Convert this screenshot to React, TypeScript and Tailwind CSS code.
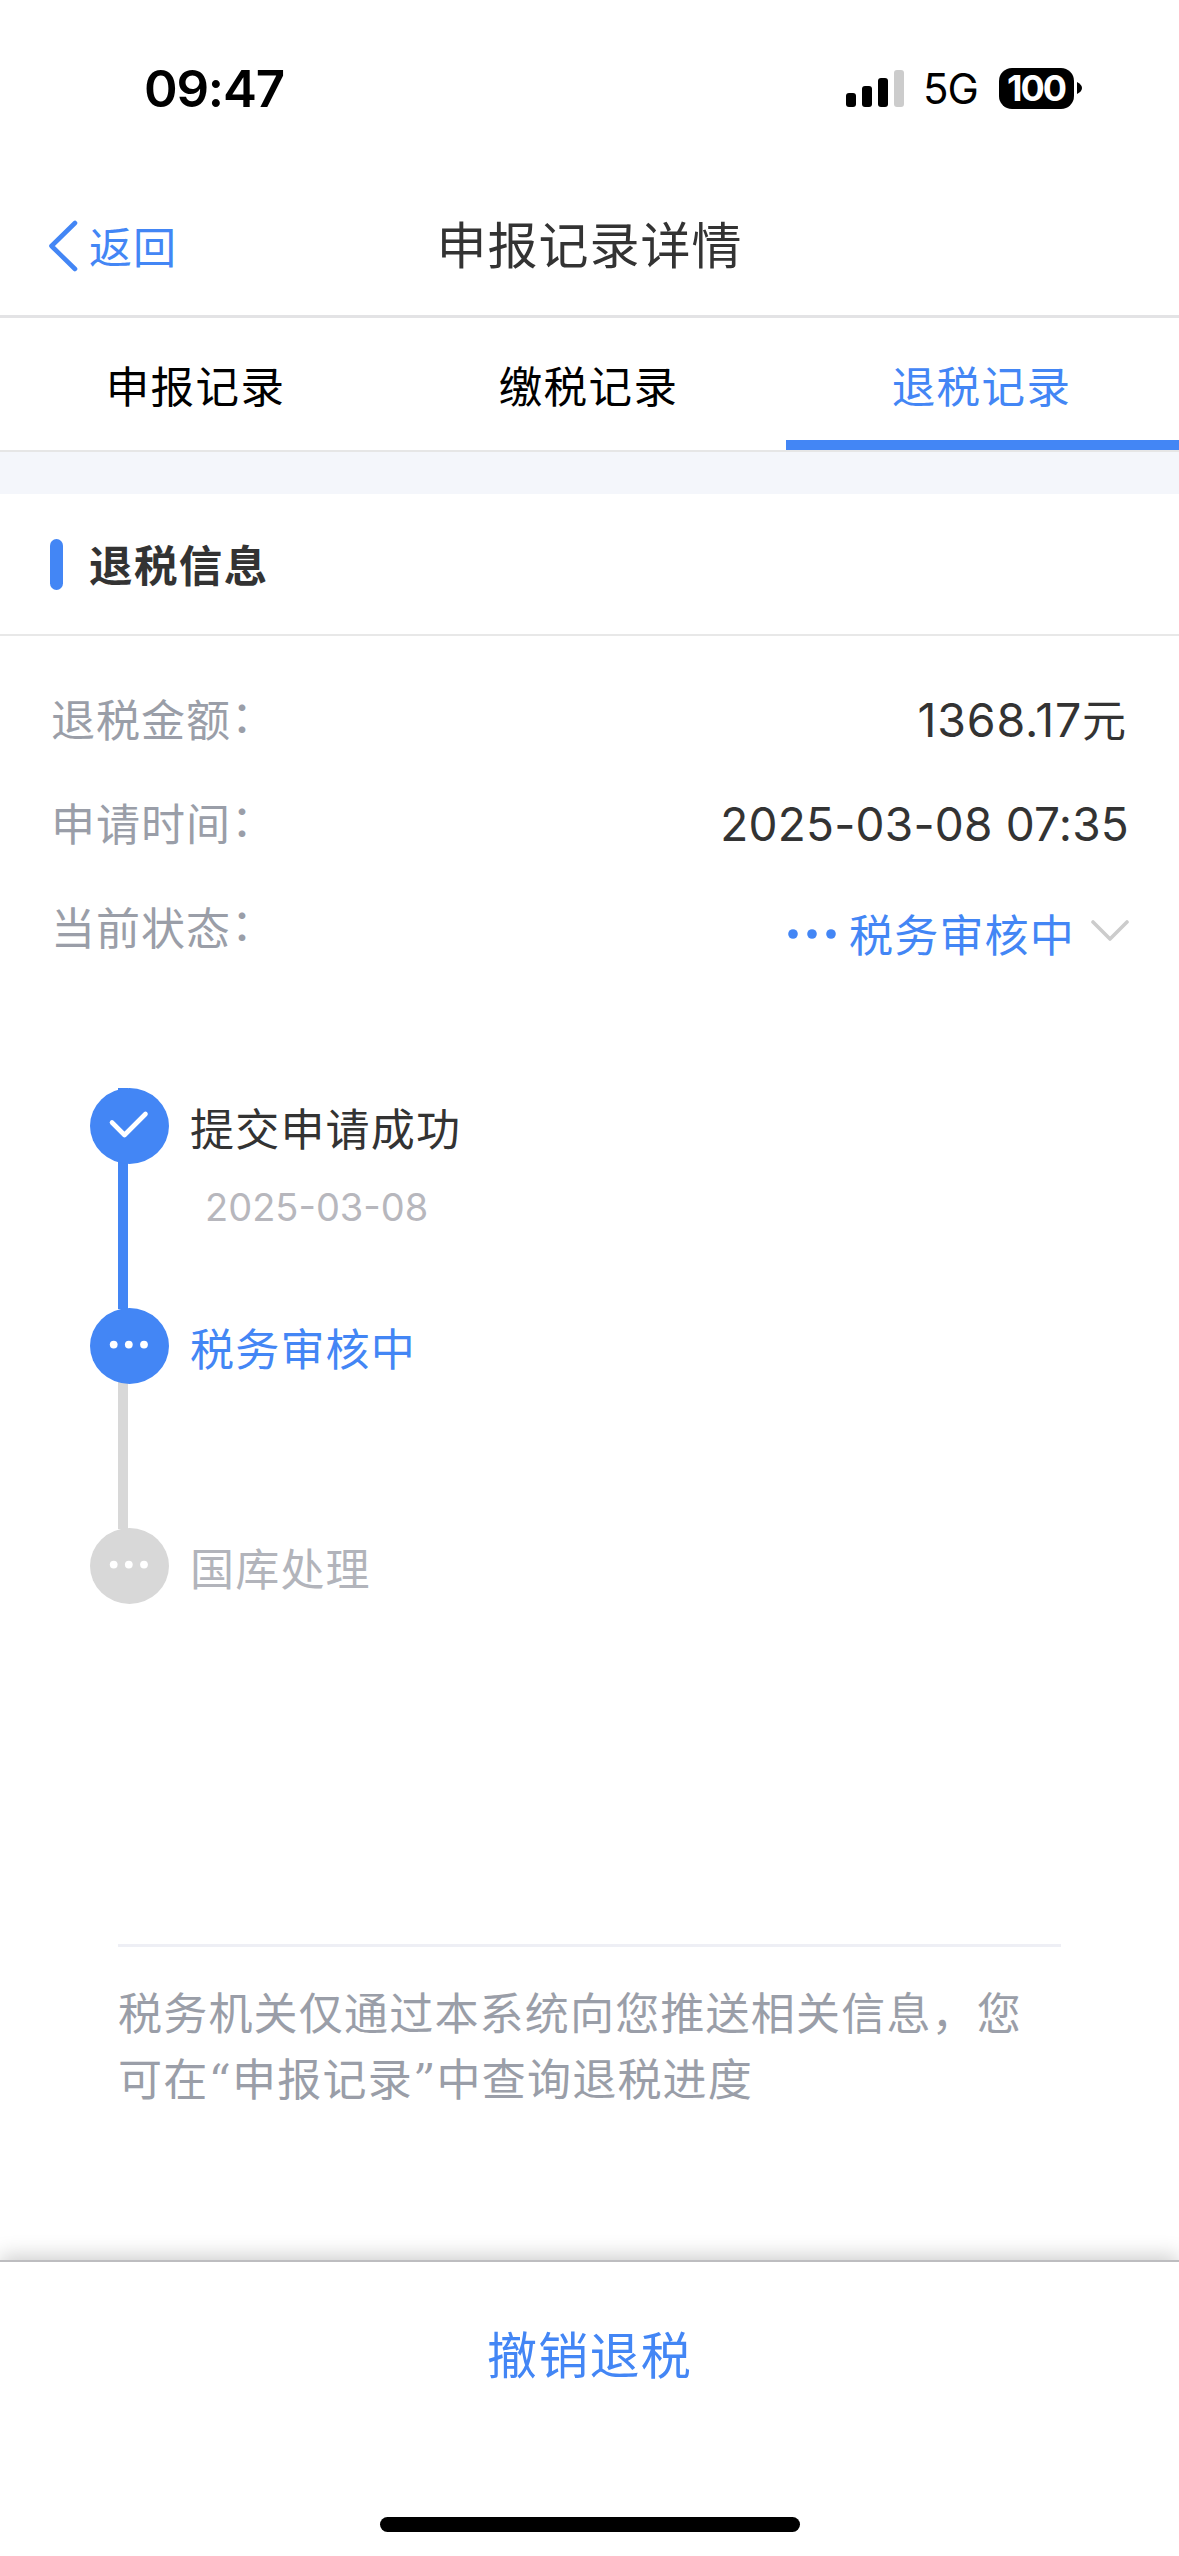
import { useState } from "react";

type StepStatus = "done" | "active" | "pending";

interface Step {
    title: string;
    date?: string;
    status: StepStatus;
}

const tabs = ["申报记录", "缴税记录", "退税记录"];

const steps: Step[] = [
    { title: "提交申请成功", date: "2025-03-08", status: "done" },
    { title: "税务审核中", status: "active" },
    { title: "国库处理", status: "pending" },
];

const circleColor = {
    done: "bg-[#4386f5]",
    active: "bg-[#4386f5]",
    pending: "bg-[#d8d8d8]",
};

const titleColor = {
    done: "text-[#333333]",
    active: "text-[#4386f5]",
    pending: "text-[#b2b4bb]",
};

const StatusBar = () => (
    <div className="flex h-[176px] shrink-0 items-center justify-between pl-[144px] pr-[97px] text-black">
        <span className="text-[51px] leading-none font-semibold tracking-[-1.2px]">09:47</span>

        <div className="flex items-center">
            <svg width="58" height="37" viewBox="0 0 58 37" className="mr-[19px]">
                <rect x="0" y="23" width="10" height="14" rx="3" />
                <rect x="16" y="16" width="10" height="21" rx="3" />
                <rect x="32" y="8" width="10" height="29" rx="3" />
                <rect x="48" y="0" width="10" height="37" rx="3" fill="#cccccc" />
            </svg>

            <span className="w-[76px] pt-px text-[42px] leading-none tracking-[-1px]">5G</span>

            <div className="flex h-[41px] w-[75px] items-center justify-center rounded-[13px] bg-black">
                <span className="pr-px text-[36px] leading-none font-bold tracking-[-2px] text-white">100</span>
            </div>
            <svg width="5" height="12" viewBox="0 0 5 12" className="ml-[3px]">
                <path d="M0 0C3 1.5 5 3.5 5 6S3 10.5 0 12Z" />
            </svg>
        </div>
    </div>
);

const StepIcon = ({ status }: { status: StepStatus }) => (
    <div className={`relative h-[76px] w-[79px] rounded-[50%] ${circleColor[status]}`}>
        <svg width="79" height="76" viewBox="0 0 79 76" fill="none">
            {status === "done" ? (
                <path d="M22 34.5L34.5 47L55.5 26" stroke="white" strokeWidth="4.6" strokeLinecap="round" strokeLinejoin="round" />
            ) : (
                <g fill="white">
                    <circle cx="23.7" cy="36.6" r="3.9" />
                    <circle cx="38.8" cy="36.6" r="3.9" />
                    <circle cx="54" cy="36.6" r="3.9" />
                </g>
            )}
        </svg>
    </div>
);

const InfoRow = ({ label, children }: { label: string; children: React.ReactNode }) => (
    <div className="flex h-[104px] items-center justify-between">
        <span className="pt-[2px] tracking-[1px] text-[#9a9ea8]">
            {label}
            <span className="relative -top-[4px]">：</span>
        </span>
        {children}
    </div>
);

const App = () => {
    const [activeTab, setActiveTab] = useState<number>(2);

    return (
        <div className="flex h-[2556px] w-[1179px] flex-col overflow-hidden bg-white font-['Inter','Noto_Sans_CJK_SC',sans-serif] text-[44px] leading-none">
            <StatusBar />

            <header className="grid h-[142px] shrink-0 grid-cols-3 items-center border-b-[3px] border-[#e3e3e5]">
                <button className="flex items-center pl-[48px] text-[#4386f5]">
                    <svg width="30" height="52" viewBox="0 0 30 52" fill="none">
                        <path d="M27 3L3.5 26L27 49" stroke="currentColor" strokeWidth="4.6" strokeLinecap="round" strokeLinejoin="round" />
                    </svg>
                    <span className="pt-[5px] pl-[11px] text-[43px] tracking-[1px]">返回</span>
                </button>
                <h1 className="text-center text-[50px] tracking-[1px] whitespace-nowrap text-[#333333]">申报记录详情</h1>
            </header>

            <nav className="grid h-[134px] shrink-0 grid-cols-3 border-b-2 border-[#e6e6e6] text-[43.5px]">
                {tabs.map((tab, i) => (
                    <button
                        key={tab}
                        onClick={() => setActiveTab(i)}
                        className={
                            i === activeTab
                                ? "border-b-[10px] border-[#4386f5] pt-[18px] pr-[2px] tracking-[1.4px] text-[#4386f5]"
                                : "border-b-[10px] border-transparent pt-[18px] pr-[2px] tracking-[1.4px] text-black"
                        }
                    >
                        {tab}
                    </button>
                ))}
            </nav>

            <div className="h-[42px] shrink-0 bg-[#f4f6fb]" />

            <div className="flex h-[142px] shrink-0 items-center border-b-2 border-[#e8e8e8] pl-[50px]">
                <div className="h-[51px] w-[13px] rounded-full bg-[#4386f5]" />
                <h2 className="pt-[6px] pl-[26px] text-[43.5px] font-bold tracking-[1.4px] text-[#333333]">退税信息</h2>
            </div>

            <section className="shrink-0 pt-[32px] pr-[50px] pl-[51px]">
                <InfoRow label="退税金额">
                    <span className="pr-[3px] text-[#333333]">
                        <span className="text-[46.5px] tracking-[0.8px]">1368.17</span>元
                    </span>
                </InfoRow>
                <InfoRow label="申请时间">
                    <span className="text-[46px] tracking-[0.2px] text-[#333333]">2025-03-08 07:35</span>
                </InfoRow>
                <InfoRow label="当前状态">
                    <div className="flex items-center pt-[12px] text-[#4386f5]">
                        <svg width="48" height="10" viewBox="0 0 48 10" fill="currentColor" className="mr-[13px]">
                            <circle cx="5" cy="5" r="4.8" />
                            <circle cx="24" cy="5" r="4.8" />
                            <circle cx="43" cy="5" r="4.8" />
                        </svg>
                        <span className="pt-[3px] tracking-[1.2px]">税务审核中</span>
                        <svg width="38" height="22" viewBox="0 0 38 22" fill="none" className="mb-[6px] ml-[16px]">
                            <path d="M2 2L19 19L36 2" stroke="#cccccc" strokeWidth="3.6" strokeLinecap="round" strokeLinejoin="round" />
                        </svg>
                    </div>
                </InfoRow>
            </section>

            <ol className="h-[964px] shrink-0 pt-[108px] pl-[90px] tracking-[1.2px]">
                {steps.map((step, i) => (
                    <li key={step.title} className="flex h-[220px]">
                        <div className="relative h-[76px]">
                            {/* connector runs behind the circle, a little left of its centre */}
                            {i < steps.length - 1 && (
                                <div
                                    className={
                                        step.status === "done"
                                            ? "absolute top-0 left-[28px] h-[221px] w-[10px] bg-[#4386f5]"
                                            : "absolute top-[38px] left-[28px] h-[183px] w-[10px] bg-[#d8d8d8]"
                                    }
                                />
                            )}
                            <StepIcon status={step.status} />
                        </div>
                        <div className="pt-[20px] pl-[21px]">
                            <p className={titleColor[step.status]}>{step.title}</p>
                            {step.date && <p className="pt-[36px] pl-[15px] text-[38px] tracking-[0px] text-[#b7b7bd]">{step.date}</p>}
                        </div>
                    </li>
                ))}
            </ol>

            <p className="mx-[118px] shrink-0 border-t-[3px] border-[#eeeff5] pt-[35px] font-['DejaVu_Serif','Noto_Sans_CJK_SC',sans-serif] leading-[66.4px] tracking-[1.2px] text-[#9a9ea8]">
                税务机关仅通过本系统向您推送相关信息，您可在“申报记录”中查询退税进度
            </p>

            <footer className="mt-auto flex h-[296px] shrink-0 flex-col items-center justify-between border-t-2 border-[#bdbdc0] bg-white pt-[69px] pb-[24px] shadow-[0_-4px_20px_rgba(0,0,0,0.2)]">
                <button className="text-[50px] tracking-[1.3px] text-[#4386f5]">撤销退税</button>
                <div className="h-[15px] w-[420px] rounded-full bg-black" />
            </footer>
        </div>
    );
};

export default App;
